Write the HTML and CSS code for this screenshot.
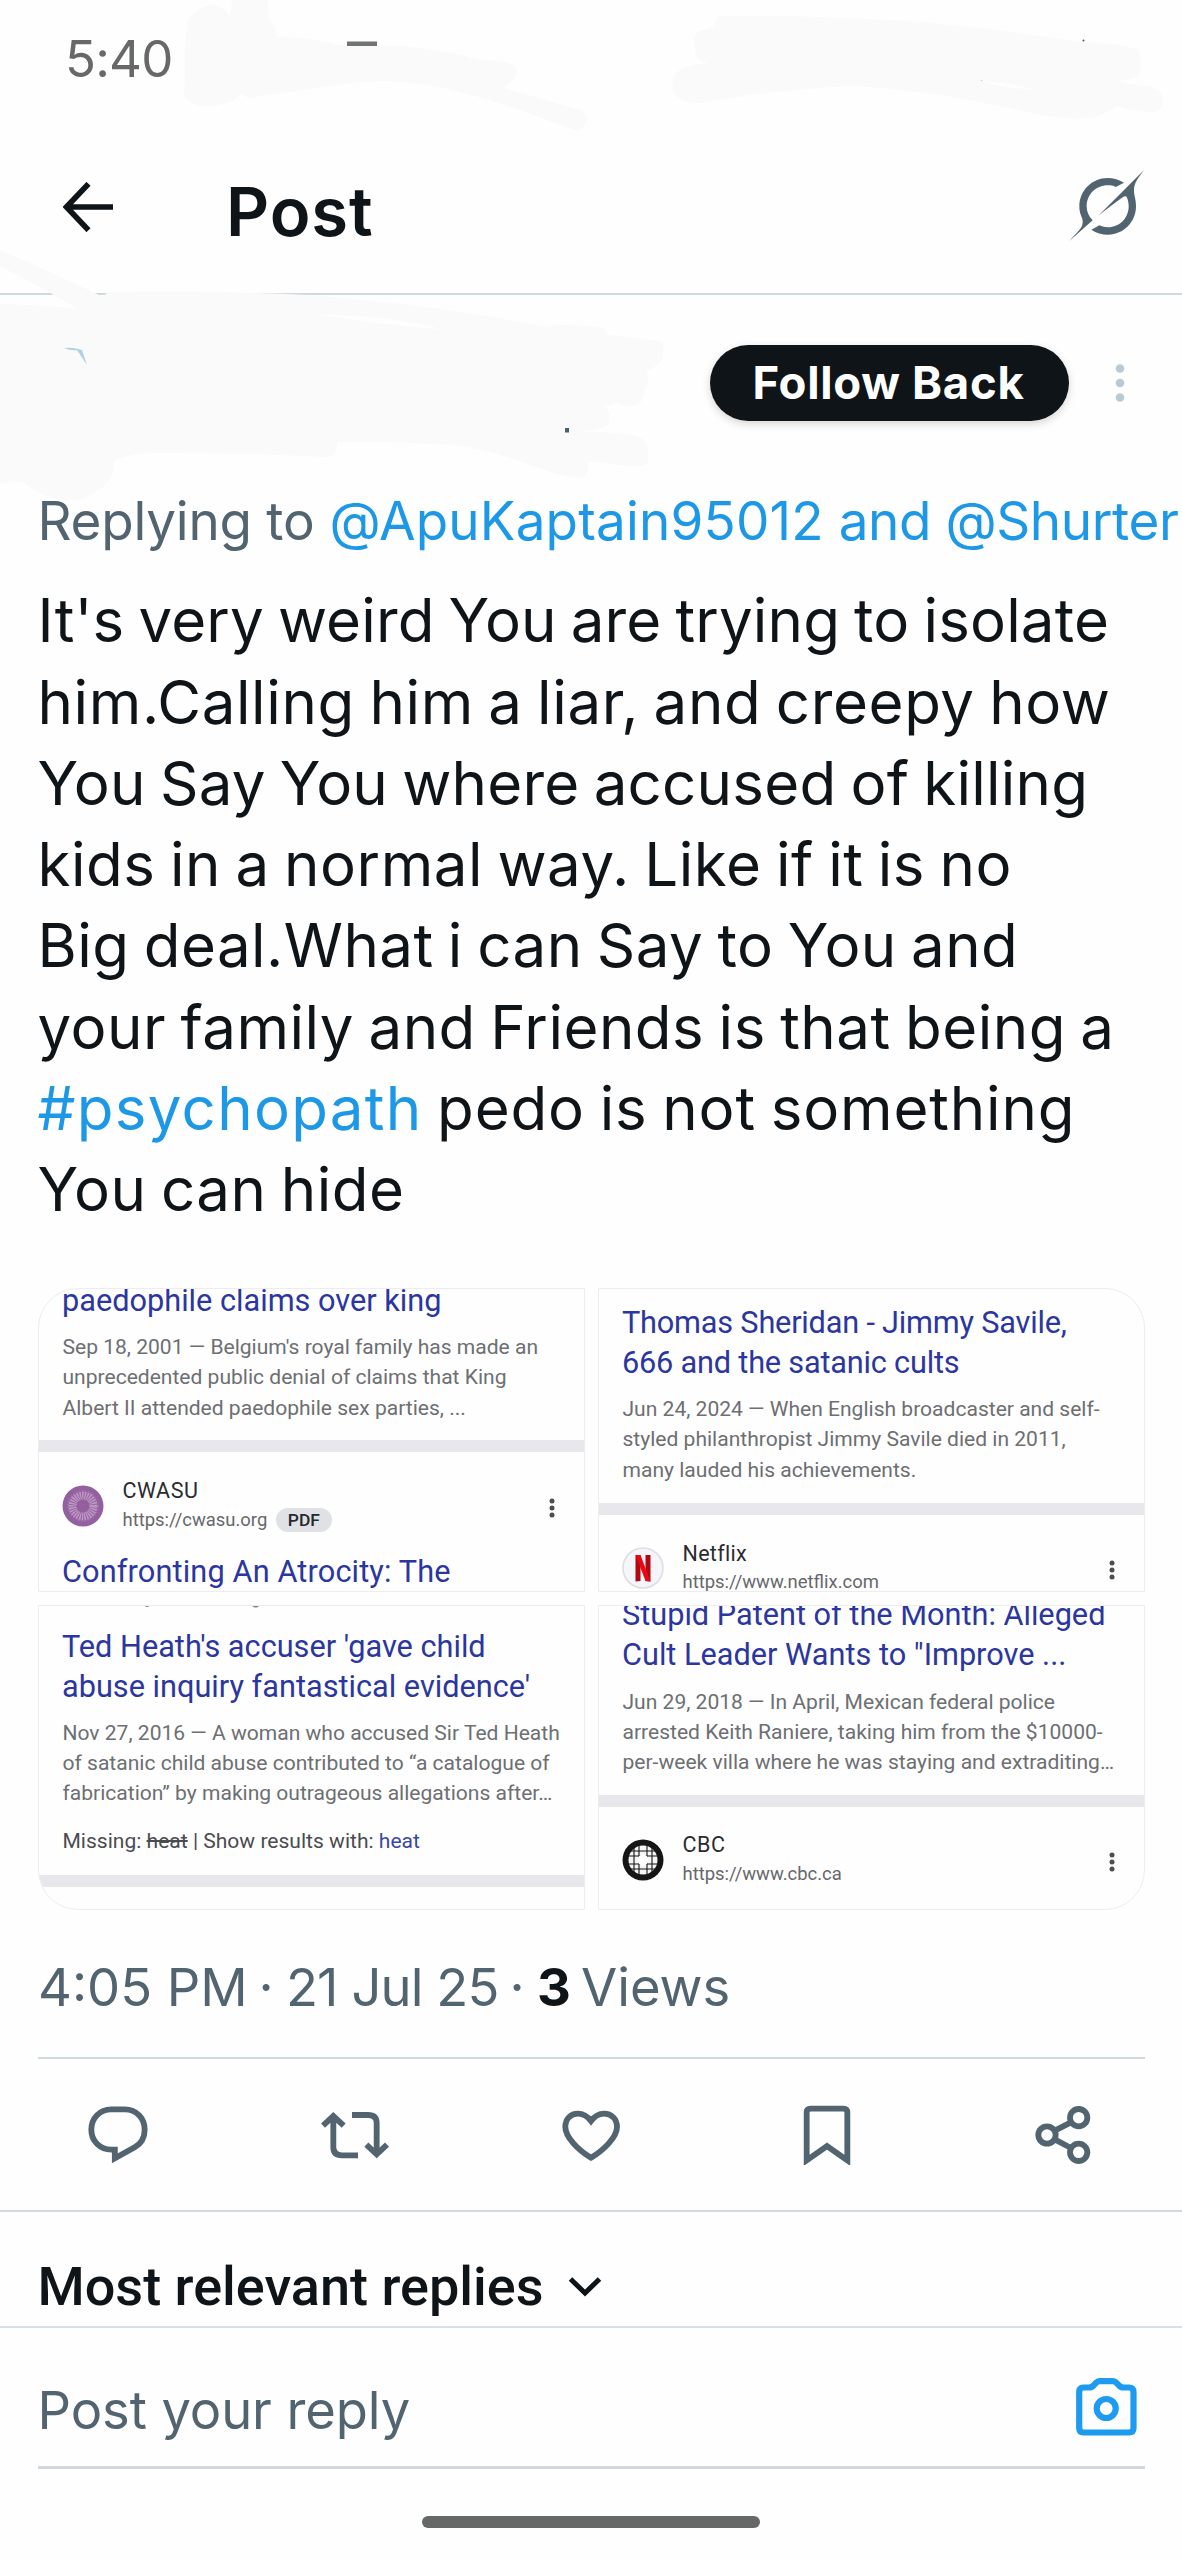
FILE: index.html
```html
<!DOCTYPE html>
<html lang="en">
<head>
<meta charset="utf-8">
<title>Post</title>
<link rel="stylesheet" href="styles.css">
</head>
<body>
<div class="screen">
  <svg class="smudges" viewBox="0 0 1182 520" aria-hidden="true">
    <g fill="#fafafa">
      <path d="M185 73C184 50 186 30 188 20Q198 5 215 5Q226 8 230 17L232 0H268L269 17Q276 27 276 37Q310 37 339 45Q365 46 400 46Q440 49 482 60Q507 61 515 66Q521 76 504 88Q550 101 580 110Q588 115 586 122Q584 129 577 131Q550 121 528 113Q490 99 452 90Q420 82 388 81Q360 81 339 85Q295 91 249 98L240 94Q235 102 226 103Q212 107 203 106Q186 104 184 93Z"/>
      <path d="M720 16Q790 15 844 18Q915 20 980 28Q1035 35 1085 42Q1125 44 1138 50Q1144 62 1140 73Q1138 80 1118 80Q1122 84 1153 87Q1164 94 1163 100Q1163 112 1152 112Q1130 111 1116 106Q1102 118 1078 119Q1050 118 1018 110Q930 90 852 86Q770 90 701 103Q678 104 673 90Q671 78 676 73Q684 65 709 63Q694 60 695 50Q692 38 697 32L715 27Q714 18 720 16Z"/>
      <path d="M0 250Q62 277 103 297Q106 292 113 292Q180 290 249 293Q310 294 362 300Q450 308 543 326Q570 323 603 328Q607 331 607 335Q640 338 662 342Q668 365 647 370Q650 380 644 393Q642 406 633 406Q623 407 617 403L605 407Q611 411 609 420Q610 430 580 432Q626 431 641 438Q650 445 648 453Q651 466 641 466Q620 466 588 461Q590 478 577 478Q555 475 520 461Q485 449 452 445Q390 441 337 442Q338 456 328 457Q240 453 151 453Q130 454 115 460Q114 482 98 490Q84 502 68 500Q45 500 23 482Q12 482 0 483V304Q50 305 78 309Q50 292 0 266Z"/>
    </g>
    <g fill="#fefefe">
      <path d="M982 81Q1005 89 1033 89Q1015 84 982 81Z"/>
      <path d="M317 314Q400 317 441 329Q380 325 317 314Z"/>
    </g>
    <path d="M347 41.5H377V46H347Z" fill="#707472"/>
    <path d="M64 348Q72 351 77 350L87 365L82 350Q72 347 64 348Z" fill="#a9d2e6"/>
    <path d="M565 428H569V432.500H565Z" fill="#4d5f6b"/>
    <circle cx="1083.500" cy="40.500" r="1" fill="#555"/>
    <circle cx="981.500" cy="80.500" r=".7" fill="#ccc"/>
  </svg>

  <div class="status">5:40</div>

  <header class="topbar">
    <svg class="back" viewBox="0 0 50 50"><path d="M25.500 1.800L3.500 25L25.500 48.200M3.500 25H50" fill="none" stroke="#0f1419" stroke-width="5.600"/></svg>
    <h1 class="topbar-title">Post</h1>
    <svg class="grok" viewBox="108 54 246 240" fill="#536471">
      <path d="M282 101C268 92 250 87 233 87C186 87 148 125 148 172C148 200 160 205 158 222C156 240 140 250 117 277C140 256 165 235 188 214C176 203 170 188 170 172C170 137 198 109 233 109C242 109 250 110 257 114Z"/>
      <path d="M205 200L342 63C320 92 311 105 312 127C313 143 318 152 318 172C318 219 281 257 234 257C216 257 199 252 184 242L208 229C216 233 225 235 234 235C269 235 296 207 296 172C296 162 294 152 290 144C288 141 284 141 279 144Q235 176 205 200Z"/>
    </svg>
  </header>

  <main class="post">
    <div class="author">
      <button class="follow" type="button">Follow Back</button>
      <svg class="more" viewBox="0 0 10 40" fill="#b9cad3"><circle cx="5" cy="5.500" r="4.300"/><circle cx="5" cy="20" r="4.300"/><circle cx="5" cy="34.500" r="4.300"/></svg>
    </div>

    <p class="replying"><span class="t-label">Replying to</span> <a class="t-first">@ApuKaptain95012</a> <a class="t-second">and @Shurter</a></p>

    <p class="body">
      <span class="line l1">It's very weird You are trying to isolate</span>
      <span class="line l2">him.Calling him a liar, and creepy how</span>
      <span class="line l3">You Say You where accused of killing</span>
      <span class="line l4">kids in a normal way. Like if it is no</span>
      <span class="line l5">Big deal.What i can Say to You and</span>
      <span class="line l6">your family and Friends is that being a</span>
      <span class="line l7"><a class="tag">#psychopath</a> pedo is not something</span>
      <span class="line l8">You can hide</span>
    </p>

    <div class="media">
      <section class="card card-a">
        <h2 class="title">paedophile claims over king</h2>
        <p class="snippet">Sep 18, 2001 — Belgium's royal family has made an<br>unprecedented public denial of claims that King<br>Albert II attended paedophile sex parties, ...</p>
        <div class="band"></div>
        <div class="site">
          <svg class="favicon" viewBox="0 0 42 42"><circle cx="21" cy="21" r="20.500" fill="#925f9f"/><circle cx="21" cy="21" r="10.500" fill="none" stroke="#bd97c3" stroke-width="8" stroke-dasharray="1.500 .8"/><circle cx="21" cy="21" r="15" fill="none" stroke="#a878b0" stroke-width="2" stroke-dasharray="1 2"/><circle cx="21" cy="21" r="5" fill="#955f9e"/></svg>
          <div class="site-text"><div class="name">CWASU</div><div class="url">https://cwasu.org <span class="pdf">PDF</span></div></div>
          <svg class="dots" viewBox="0 0 6 22" fill="#4b4d50"><circle cx="3" cy="4" r="2.500"/><circle cx="3" cy="11" r="2.500"/><circle cx="3" cy="18" r="2.500"/></svg>
        </div>
        <h2 class="title next">Confronting An Atrocity: The</h2>
      </section>

      <section class="card card-b">
        <h2 class="title">Thomas Sheridan - Jimmy Savile,<br>666 and the satanic cults</h2>
        <p class="snippet">Jun 24, 2024 — When English broadcaster and self-<br>styled philanthropist Jimmy Savile died in 2011,<br>many lauded his achievements.</p>
        <div class="band"></div>
        <div class="site">
          <svg class="favicon" viewBox="0 0 42 42"><circle cx="21" cy="21" r="20" fill="#f5f6f9" stroke="#dcdde3" stroke-width="1.500"/><path d="M13.500 8H18.500V34L13.500 34.500ZM23.500 8H28.500V34.500L23.500 34Z" fill="#b20710"/><path d="M13.500 8H18.500L28.500 34.500L23.500 34Z" fill="#e50914"/></svg>
          <div class="site-text"><div class="name name-b">Netflix</div><div class="url">https://www.netflix.com</div></div>
          <svg class="dots" viewBox="0 0 6 22" fill="#4b4d50"><circle cx="3" cy="4" r="2.500"/><circle cx="3" cy="11" r="2.500"/><circle cx="3" cy="18" r="2.500"/></svg>
        </div>
      </section>

      <section class="card card-c">
        <svg class="cut" viewBox="0 0 547 3" fill="#8a8a8a"><path d="M107 0H110V1H107ZM214 0H221L219 1.500H216Z"/></svg>
        <h2 class="title">Ted Heath's accuser 'gave child<br>abuse inquiry fantastical evidence'</h2>
        <p class="snippet">Nov 27, 2016 — A woman who accused Sir Ted Heath<br>of satanic child abuse contributed to “a catalogue of<br>fabrication” by making outrageous allegations after…</p>
        <p class="missing">Missing: <s>heat</s> | Show results with: <a>heat</a></p>
        <div class="band"></div>
      </section>

      <section class="card card-d">
        <h2 class="title">Stupid Patent of the Month: Alleged<br>Cult Leader Wants to "Improve ...</h2>
        <p class="snippet">Jun 29, 2018 — In April, Mexican federal police<br>arrested Keith Raniere, taking him from the $10000-<br>per-week villa where he was staying and extraditing…</p>
        <div class="band"></div>
        <div class="site">
          <svg class="favicon" viewBox="0 0 42 42"><circle cx="21" cy="21" r="20.500" fill="#151515"/><circle cx="21" cy="21" r="14.500" fill="#f4f4f4"/><path d="M12 6V36M17 6V36M25 6V36M30 6V36M6 12H36M6 17H36M6 25H36M6 30H36" fill="none" stroke="#151515" stroke-width="1.100"/><circle cx="21" cy="21" r="5.500" fill="#fff"/></svg>
          <div class="site-text"><div class="name">CBC</div><div class="url">https://www.cbc.ca</div></div>
          <svg class="dots" viewBox="0 0 6 22" fill="#4b4d50"><circle cx="3" cy="4" r="2.500"/><circle cx="3" cy="11" r="2.500"/><circle cx="3" cy="18" r="2.500"/></svg>
        </div>
      </section>
    </div>

    <p class="meta"><span class="m-time">4:05 PM</span><span class="m-dot">·</span><span class="m-date">21 Jul 25</span><span class="m-dot">·</span><b>3</b><span class="m-views">Views</span></p>

    <div class="actions">
      <span class="action"><svg width="60" height="60" viewBox="25 44 180 180"><path d="M95 57H136C170 57 195 84 195 118C195 140 184 160 165 171L105.500 204V178H95C60 178 35 151 35 118C35 84 60 57 95 57Z"/></svg></span>
      <span class="action"><svg width="70" height="60" viewBox="719 44 210 180"><path d="M759 75V171Q759 195 785 195H833M728 106L759 77L790 106M815 74H863Q889 74 889 98V193M858 163L889 192L920 163"/></svg></span>
      <span class="action"><svg width="60" height="60" viewBox="1443 44 180 180"><path d="M1533 202C1495 180 1456 140 1456 110C1456 85 1472 70 1494 70C1512 70 1524 80 1533 92C1542 80 1554 70 1572 70C1594 70 1611 85 1611 110C1611 140 1571 180 1533 202Z"/></svg></span>
      <span class="action"><svg width="60" height="60" viewBox="592 46 180 180"><path d="M621 212V69Q621 57 633 57H731Q743 57 743 69V212L682 169Z"/></svg></span>
      <span class="action"><svg width="60" height="60" viewBox="1300 44 180 180"><circle cx="1339" cy="134" r="26"/><circle cx="1434" cy="82" r="26"/><circle cx="1434" cy="186" r="26"/><path d="M1362 121L1411 96M1362 147L1411 173"/></svg></span>
    </div>

    <div class="sort">Most relevant replies<svg class="chevron" viewBox="0 0 34 22"><path d="M2.500 3L17 17L31.500 3" fill="none" stroke="#0f1419" stroke-width="5"/></svg></div>
  </main>

  <footer class="composer">
    <div class="field">
      <span class="placeholder">Post your reply</span>
      <svg class="camera" viewBox="0 0 61 58" fill="none" stroke="#1d9bf0" stroke-width="6.200"><path d="M7.500 9.500H13Q16 9.500 18 7L20 4.800Q21.500 3.200 23.500 3.200H37Q39 3.200 40.500 4.800L42.500 7Q44.500 9.500 47.500 9.500H53Q57.500 9.500 57.500 14V50Q57.500 54.500 53 54.500H7.500Q3.200 54.500 3.200 50V14Q3.200 9.500 7.500 9.500Z"/><circle cx="30.200" cy="30.500" r="9.500"/></svg>
    </div>
    <div class="homebar"></div>
  </footer>
</div>
</body>
</html>
```
FILE: styles.css
```css
* { box-sizing: border-box; }

body {
  margin: 0;
  background: #fefefe;
  color: #0f1419;
  font-family: Inter, "Liberation Sans", sans-serif;
}

h1, h2, p { margin: 0; font-weight: 400; }
svg { display: block; flex: none; }

.screen {
  position: relative;
  width: 1182px;
  height: 2560px;
  overflow: hidden;
  display: flex;
  flex-direction: column;
}

.smudges {
  position: absolute;
  top: 0;
  left: 0;
  width: 1182px;
  height: 520px;
  pointer-events: none;
}

.status {
  height: 110px;
  padding: 29px 0 0 65px;
  font-size: 51px;
  line-height: 60px;
  letter-spacing: -.8px;
  color: #666967;
}

.topbar {
  height: 185px;
  padding: 10px 34px 0 63px;
  display: flex;
  align-items: center;
  border-bottom: 2px solid #cfd9de;
}
.back { width: 50px; height: 50px; }
.topbar-title {
  margin-left: 113px;
  padding-top: 10px;
  font-size: 67px;
  line-height: 80px;
  font-weight: 600;
  letter-spacing: .9px;
}
.grok { width: 82px; height: 80px; margin: 1px 0 0 auto; }

.author {
  height: 196.300px;
  padding: 49.500px 57px 0 0;
  display: flex;
  justify-content: flex-end;
}
.follow {
  width: 359px;
  height: 76px;
  border: 0;
  border-radius: 38px;
  background: #0f1419;
  color: #fff;
  font: 700 45.500px/76px Inter, "Liberation Sans", sans-serif;
  letter-spacing: .7px;
  padding: 0 2px 0 0;
  white-space: nowrap;
  box-shadow: 0 3px 8px rgba(0, 0, 0, .16);
}
.more { width: 10px; height: 40px; margin: 18px 0 0 46px; }

.replying {
  padding-left: 37.500px;
  font-size: 53px;
  line-height: 60px;
  color: #536471;
  white-space: nowrap;
}
.replying a, .tag { color: #1d98e6; }
.t-label { letter-spacing: -.25px; }
.t-first { letter-spacing: .18px; }
.t-second { letter-spacing: -.41px; }

.body {
  margin-top: 29.100px;
  padding-left: 37.500px;
  font-size: 60px;
  line-height: 81.270px;
  word-spacing: -3px;
}
.line { display: block; white-space: nowrap; }
.l1 { letter-spacing: .16px; }
.l2 { letter-spacing: .62px; }
.l3 { letter-spacing: .24px; }
.l4 { letter-spacing: .54px; }
.l5 { letter-spacing: .45px; }
.l6 { letter-spacing: .5px; }
.l7 { letter-spacing: .85px; }
.l8 { letter-spacing: .5px; }
.tag { letter-spacing: 1.280px; }

.media {
  margin: 57.200px 37px 0 38px;
  display: grid;
  grid-template-columns: 547px 547px;
  grid-template-rows: 304px 305px;
  gap: 13px;
}
.card {
  border: 1px solid #ededee;
  overflow: hidden;
  display: flow-root;
  white-space: nowrap;
  font-family: Roboto, "Liberation Sans", sans-serif;
}
.card-a { border-top-left-radius: 40px; }
.card-b { border-top-right-radius: 40px; }
.card-c { border-bottom-left-radius: 40px; }
.card-d { border-bottom-right-radius: 40px; }

.title {
  margin-left: 23px;
  font-size: 30.700px;
  line-height: 40px;
  color: #2b36a0;
}
.card-a > .title:first-child { margin-top: -7.800px; }
.card-b > .title { margin-top: 14.300px; letter-spacing: -.2px; }
.card-c > .title { margin-top: 18px; }
.card-d > .title { margin-top: -10.300px; }
.title.next { margin-top: 15.700px; letter-spacing: .13px; }
.cut { width: 545px; height: 3px; }

.snippet, .missing {
  margin: 11.200px 0 0 23.500px;
  font-size: 21.050px;
  line-height: 30.300px;
  color: #6d6f72;
}
.missing { margin-top: 17.300px; color: #4a4c4f; }
.missing a { color: #3948a5; }

.band { height: 12px; margin-top: 17.500px; background: #e8e8ec; }
.missing + .band { margin-top: 18.300px; }

.site {
  margin: 23.500px 29px 0 23px;
  height: 60px;
  display: flex;
  align-items: center;
}
.card-d .site { margin-top: 22.800px; }
.favicon { width: 42px; height: 42px; }
.site-text { margin-left: 18.500px; line-height: 29.500px; }
.name { font-size: 21.500px; letter-spacing: .5px; color: #2a2b2e; }
.name-b { letter-spacing: .3px; }
.url { font-size: 18.450px; color: #66686b; }
.pdf {
  display: inline-block;
  margin-left: 4px;
  padding: 0 12px;
  border-radius: 12px;
  background: #dfe1e5;
  color: #26282b;
  font-size: 17.400px;
  font-weight: 500;
  line-height: 24px;
}
.dots { width: 6px; height: 22px; margin: 4px 0 0 auto; }

.meta {
  margin: 47.500px 37px 0 38px;
  height: 102px;
  border-bottom: 2px solid #cfd9de;
  font-size: 52.500px;
  line-height: 60px;
  color: #536471;
  display: flex;
  white-space: nowrap;
}
.meta b { width: 44px; color: #0f1419; }
.m-time { width: 208px; }
.m-date { width: 211px; letter-spacing: -.9px; }
.m-dot { width: 40px; text-align: center; }

.actions {
  height: 153px;
  border-bottom: 2px solid #cfd9de;
  display: grid;
  grid-template-columns: repeat(5, 1fr);
  place-items: center;
}
.action svg { fill: none; stroke: #536471; stroke-width: 17.500; }

.sort {
  height: 116px;
  padding: 45px 0 0 37.500px;
  border-bottom: 2px solid #d7e0e4;
  font: 500 54px/60px Roboto, "Liberation Sans", sans-serif;
  display: flex;
  white-space: nowrap;
}
.chevron { width: 34px; height: 22px; margin: 19px 0 0 24px; }

.composer { display: flex; flex-direction: column; align-items: center; }
.field {
  width: 1107px;
  height: 141px;
  border-bottom: 3px solid #cfd9de;
  display: flex;
  justify-content: space-between;
  padding: 0 8px 0 0;
}
.placeholder { padding-top: 52px; font-size: 52.500px; line-height: 60px; letter-spacing: -.1px; color: #536471; }
.camera { width: 61px; height: 58px; margin-top: 49.500px; }
.homebar { width: 338px; height: 12px; margin-top: 47px; border-radius: 6px; background: #666867; }
```
